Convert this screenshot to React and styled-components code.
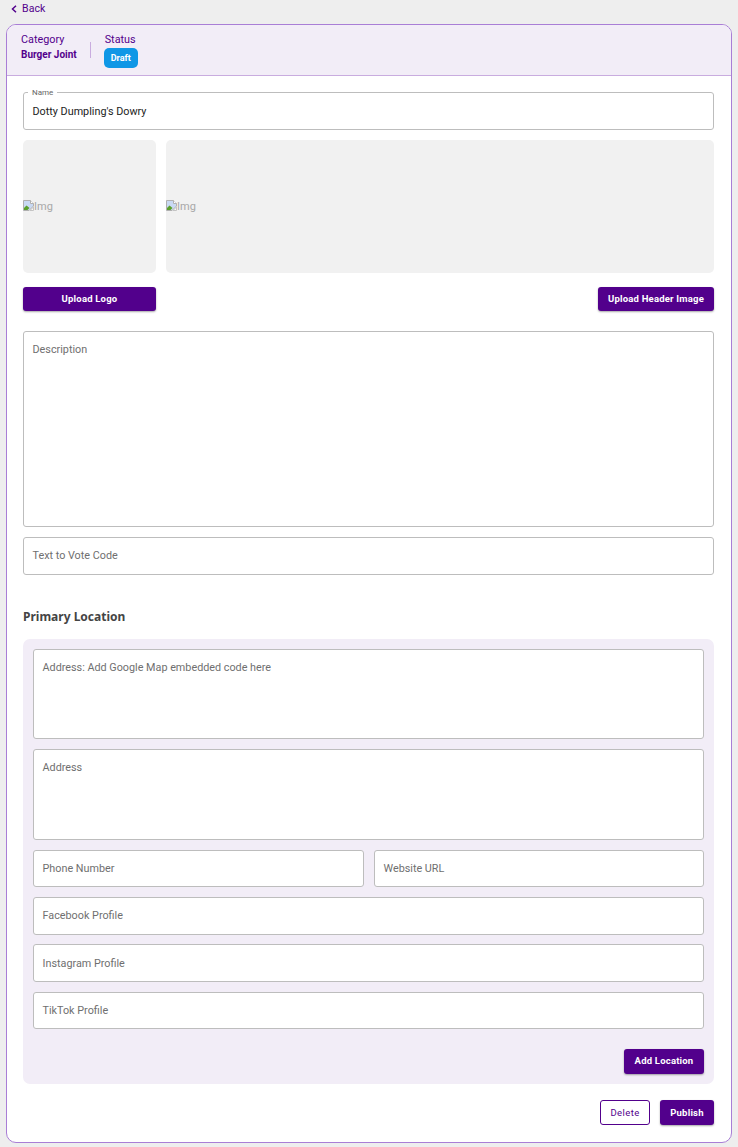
import React from "react";
import styled, { createGlobalStyle } from "styled-components";

const GlobalStyle = createGlobalStyle`
  html, body {
    margin: 0;
    padding: 0;
    background: #eeeeee;
    font-family: Roboto, "Liberation Sans", sans-serif;
  }
`;

const purple = "#52008c";

const BrokenIcon = () => (
  <svg width="11" height="11" viewBox="0 0 11 11">
    <path d="M0.5 0.5H7.5L10.5 3.5V6L6 10.5H0.5Z" fill="#c9d9f3" stroke="#b0b0b0" />
    <path d="M7.5 0.5V3.5H10.5" fill="#fff" stroke="#b0b0b0" />
    <path d="M1 10V8L3.5 5.5L6.5 8L4.5 10Z" fill="#5aa02c" />
    <path d="M10.5 7V10.5H7Z" fill="#f8f8f8" stroke="#c4c4c4" />
  </svg>
);

const App = () => (
  <>
    <GlobalStyle />
    <Page>
      <BackRow>
        <svg width="6" height="8" viewBox="0 0 6 8">
          <path d="M5 0.8L1.5 4L5 7.2" fill="none" stroke={purple} strokeWidth="1.5" />
        </svg>
        Back
      </BackRow>
      <Card>
        <Header>
          <Meta>
            <MetaLabel>Category</MetaLabel>
            <MetaValue>Burger Joint</MetaValue>
          </Meta>
          <Divider />
          <Meta>
            <MetaLabel>Status</MetaLabel>
            <Badge>Draft</Badge>
          </Meta>
        </Header>
        <Body>
          <Field $h={38} $filled>
            <Notch>Name</Notch>
            Dotty Dumpling's Dowry
          </Field>
          <Images>
            <ImageBox>
              <BrokenIcon />
              Img
            </ImageBox>
            <ImageBox>
              <BrokenIcon />
              Img
            </ImageBox>
          </Images>
          <UploadRow>
            <Button $w={133}>Upload Logo</Button>
            <Button $w={116}>Upload Header Image</Button>
          </UploadRow>
          <Field $h={196} $multi>Description</Field>
          <Field $h={38}>Text to Vote Code</Field>
          <SectionTitle>Primary Location</SectionTitle>
          <Panel>
            <Field $h={90} $multi>Address: Add Google Map embedded code here</Field>
            <Field $h={91} $multi>Address</Field>
            <TwoCols>
              <Field $h={37}>Phone Number</Field>
              <Field $h={37}>Website URL</Field>
            </TwoCols>
            <Field $h={38} $gap={9}>Facebook Profile</Field>
            <Field $h={38} $filledTop>Instagram Profile</Field>
            <Field $h={37}>TikTok Profile</Field>
            <PanelActions>
              <Button $w={80} $h={25}>Add Location</Button>
            </PanelActions>
          </Panel>
          <Actions>
            <OutlineButton $h={25}>Delete</OutlineButton>
            <Button $w={54} $h={25} $lh={25}>Publish</Button>
          </Actions>
        </Body>
      </Card>
    </Page>
  </>
);

export default App;

const Page = styled.div`
  width: 738px;
  height: 1147px;
  padding: 0 6px;
  box-sizing: border-box;
  overflow: hidden;
`;

const BackRow = styled.div`
  height: 24px;
  padding: 2px 0 0 5px;
  box-sizing: border-box;
  display: flex;
  align-items: flex-start;
  gap: 5px;
  font-size: 10.5px;
  line-height: 14px;
  letter-spacing: 0.1px;
  color: ${purple};

  svg {
    margin-top: 3px;
  }
`;

const Card = styled.div`
  height: 1119px;
  box-sizing: border-box;
  background: #fff;
  border: 1px solid #a97ed6;
  border-radius: 10px;
  overflow: hidden;
`;

const Header = styled.div`
  height: 51px;
  box-sizing: border-box;
  background: #f2edf7;
  border-bottom: 1px solid #c9acdf;
  padding: 8px 0 0 14px;
  display: flex;
  align-items: flex-start;
`;

const Meta = styled.div`
  display: flex;
  flex-direction: column;
  align-items: flex-start;
`;

const MetaLabel = styled.div`
  font-size: 10.8px;
  line-height: 14px;
  color: ${purple};
`;

const MetaValue = styled.div`
  font-size: 10px;
  line-height: 14px;
  margin-top: 1px;
  font-weight: 700;
  color: ${purple};
`;

const Divider = styled.div`
  width: 1px;
  height: 16px;
  margin: 9px 14px 0 13px;
  background: #c9acdf;
`;

const Badge = styled.div`
  width: 34px;
  height: 20px;
  margin: 1px 0 0 -1px;
  border-radius: 5px;
  background: #0f97e6;
  color: #fff;
  font-size: 9px;
  font-weight: 700;
  line-height: 20px;
  text-align: center;
`;

const Body = styled.div`
  padding: 16px 17px 0 16px;
`;

const Field = styled.div`
  position: relative;
  height: ${(p) => p.$h}px;
  box-sizing: border-box;
  border: 1px solid #bdbdbd;
  border-radius: 3px;
  background: #fff;
  margin-bottom: ${(p) => p.$gap ?? 10}px;
  padding: ${(p) => (p.$multi ? "11px 8.5px 0" : p.$filled || p.$filledTop ? "1px 8.5px 0" : "0 8.5px")};
  display: flex;
  align-items: ${(p) => (p.$multi ? "flex-start" : "center")};
  font-size: 10.8px;
  line-height: 14px;
  color: ${(p) => (p.$filled ? "#222222" : "#6f6f6f")};
`;

const Notch = styled.span`
  position: absolute;
  top: -5px;
  left: 4px;
  padding: 0 4px;
  background: #fff;
  font-size: 8px;
  line-height: 9px;
  color: #666666;
`;

const Images = styled.div`
  display: flex;
  gap: 10px;
  height: 133px;
`;

const ImageBox = styled.div`
  flex: 1;
  &:first-child {
    flex: 0 0 133px;
  }
  background: #f1f1f1;
  border-radius: 5px;
  display: flex;
  align-items: center;
  font-size: 11px;
  color: #a8a8a8;

  svg {
    flex-shrink: 0;
    margin-bottom: 3px;
  }
`;

const UploadRow = styled.div`
  display: flex;
  justify-content: space-between;
  margin: 14px 0 20px;
`;

const Button = styled.div`
  width: ${(p) => p.$w}px;
  height: ${(p) => p.$h ?? 24}px;
  border-radius: 3px;
  background: ${purple};
  color: #fff;
  font-size: 9.5px;
  font-weight: 700;
  letter-spacing: 0.2px;
  line-height: ${(p) => p.$lh ?? 24}px;
  text-align: center;
  white-space: nowrap;
  box-shadow: 0 1px 2px rgba(0, 0, 0, 0.35);
`;

const OutlineButton = styled(Button)`
  width: 50px;
  box-sizing: border-box;
  background: #fff;
  border: 1px solid ${purple};
  line-height: 23px;
  font-weight: 400;
  letter-spacing: 0.4px;
  color: ${purple};
  box-shadow: none;
`;

const SectionTitle = styled.div`
  margin: 33px 0 13px;
  font-family: "Noto Sans", sans-serif;
  font-size: 12px;
  font-weight: 700;
  line-height: 18px;
  color: #444444;
`;

const Panel = styled.div`
  height: 445px;
  box-sizing: border-box;
  background: #f2edf7;
  border-radius: 7px;
  padding: 10px;
`;

const TwoCols = styled.div`
  display: grid;
  grid-template-columns: 331px 330px;
  gap: 10px;
`;

const PanelActions = styled.div`
  display: flex;
  justify-content: flex-end;
  margin-top: 20px;
`;

const Actions = styled.div`
  display: flex;
  justify-content: flex-end;
  gap: 10px;
  margin-top: 16px;
`;
